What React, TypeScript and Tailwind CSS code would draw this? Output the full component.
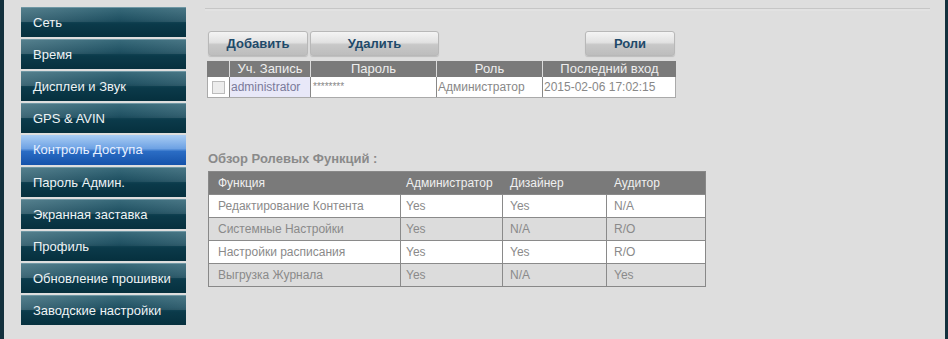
import React from "react";

const menu = [
  "Сеть",
  "Время",
  "Дисплеи и Звук",
  "GPS & AVIN",
  "Контроль Доступа",
  "Пароль Админ.",
  "Экранная заставка",
  "Профиль",
  "Обновление прошивки",
  "Заводские настройки",
];

const roles = [
  ["Редактирование Контента", "Yes", "Yes", "N/A"],
  ["Системные Настройки", "Yes", "N/A", "R/O"],
  ["Настройки расписания", "Yes", "Yes", "R/O"],
  ["Выгрузка Журнала", "Yes", "N/A", "Yes"],
];

function Btn({ children, w }: { children: React.ReactNode; w: string }) {
  return (
    <div
      className={`${w} h-[25px] flex items-center justify-center rounded-[3px] border border-[#b8b8b8] bg-[linear-gradient(to_bottom,#f4f4f4_0%,#e2e2e2_45%,#c8c8c8_55%,#bdbdbd_100%)] shadow-[0_1px_1px_rgba(0,0,0,0.15)] text-[13px] font-bold text-[#1f4a6a]`}
    >
      {children}
    </div>
  );
}

export default function App() {
  return (
    <div
      className="w-[948px] h-[339px] bg-[#dedede] flex overflow-hidden"
      style={{ fontFamily: '"Liberation Sans", Arial, sans-serif' }}
    >
      <div className="w-[4px] h-full bg-[#13303d] shrink-0" />
      <div className="w-[165px] ml-[17px] mt-[7px] flex flex-col gap-[2px] shrink-0">
        {menu.map((m, i) => {
          const active = i === 4;
          return (
            <div
              key={m}
              className={
                "relative h-[30px] flex items-center pl-[12px] text-[13px] overflow-hidden " +
                (active
                  ? "bg-[linear-gradient(to_bottom,#a9cdf4_0%,#6ea2e4_45%,#2a6cc4_55%,#1552aa_100%)] text-[#e8f0ff]"
                  : "bg-[linear-gradient(to_bottom,#2f6374_0%,#174a5c_40%,#0b3a4a_55%,#06303e_100%)] text-[#eef3f5] border-t border-[#6f97a4]")
              }
            >
              {!active && (
                <div className="absolute left-0 top-0 w-full h-[14px] bg-[linear-gradient(to_right,rgba(255,255,255,0.18),rgba(255,255,255,0.04)_60%,rgba(255,255,255,0.12))]" />
              )}
              <span className="relative">{m}</span>
            </div>
          );
        })}
      </div>
      <div className="flex-1 ml-[19px] mr-[15px] relative">
        <div className="mt-[8px] h-[3px] border-t border-[#c6c6c6] bg-[#e2e2e2] w-[725px]" />
        <div className="ml-[3px] mt-[20px] flex">
          <Btn w="w-[100px]">Добавить</Btn>
          <div className="w-[2px]" />
          <Btn w="w-[129px]">Удалить</Btn>
          <div className="w-[146px]" />
          <Btn w="w-[90px]">Роли</Btn>
        </div>
        <div className="ml-[2px] mt-[5px] w-[469px] text-[12px] text-[#888]">
          <div className="flex h-[16px] bg-[#7a7a7a] text-[#eeeeee] text-[13px] leading-[16px]">
            <div className="w-[22px]" />
            <div className="w-[81px] text-center border-l border-[#dcdcdc]">Уч. Запись</div>
            <div className="w-[126px] text-center border-l border-[#dcdcdc]">Пароль</div>
            <div className="w-[106px] text-center border-l border-[#dcdcdc]">Роль</div>
            <div className="flex-1 text-center border-l border-[#dcdcdc]">Последний вход</div>
          </div>
          <div className="flex h-[21px] bg-white border border-t-0 border-[#aaa] leading-[20px]">
            <div className="w-[21px] flex items-center justify-center">
              <div className="w-[13px] h-[13px] border border-[#bbb] bg-[#ececec]" />
            </div>
            <div className="w-[81px] bg-[#e8e8f8] border-l border-[#888] text-[12px] text-[#7a7a9a] pl-[1px]">administrator</div>
            <div className="w-[126px] border-l border-[#888] pl-[2px] text-[10px]">********</div>
            <div className="w-[106px] border-l border-[#888] pl-[1px]">Администратор</div>
            <div className="flex-1 border-l border-[#888] pl-[1px]">2015-02-06 17:02:15</div>
          </div>
        </div>
        <div className="ml-[3px] mt-[53px] text-[13px] font-bold text-[#8a8a8a] leading-[16px]">
          Обзор Ролевых Функций :
        </div>
        <div className="ml-[3px] mt-[4px] w-[498px] border border-[#888] text-[12px] text-[#8a8a8a]">
          <div className="flex h-[22px] bg-[#7a7a7a] text-[#f0f0f0] items-center">
            <div className="w-[192px] pl-[9px]">Функция</div>
            <div className="w-[102px] pl-[5px]">Администратор</div>
            <div className="w-[104px] pl-[7px]">Дизайнер</div>
            <div className="flex-1 pl-[7px]">Аудитор</div>
          </div>
          {roles.map((r, i) => (
            <div
              key={r[0]}
              className={
                "flex h-[23px] items-center border-t border-[#8a8a8a] " +
                (i % 2 === 0 ? "bg-white" : "bg-[#dcdcdc]")
              }
            >
              <div className="w-[192px] h-full flex items-center pl-[9px] border-r border-[#8a8a8a]">{r[0]}</div>
              <div className="w-[102px] h-full flex items-center pl-[5px] border-r border-[#8a8a8a]">{r[1]}</div>
              <div className="w-[104px] h-full flex items-center pl-[7px] border-r border-[#8a8a8a]">{r[2]}</div>
              <div className="flex-1 h-full flex items-center pl-[7px]">{r[3]}</div>
            </div>
          ))}
        </div>
      </div>
      <div className="w-[3px] h-full bg-[#13303d] shrink-0" />
    </div>
  );
}
